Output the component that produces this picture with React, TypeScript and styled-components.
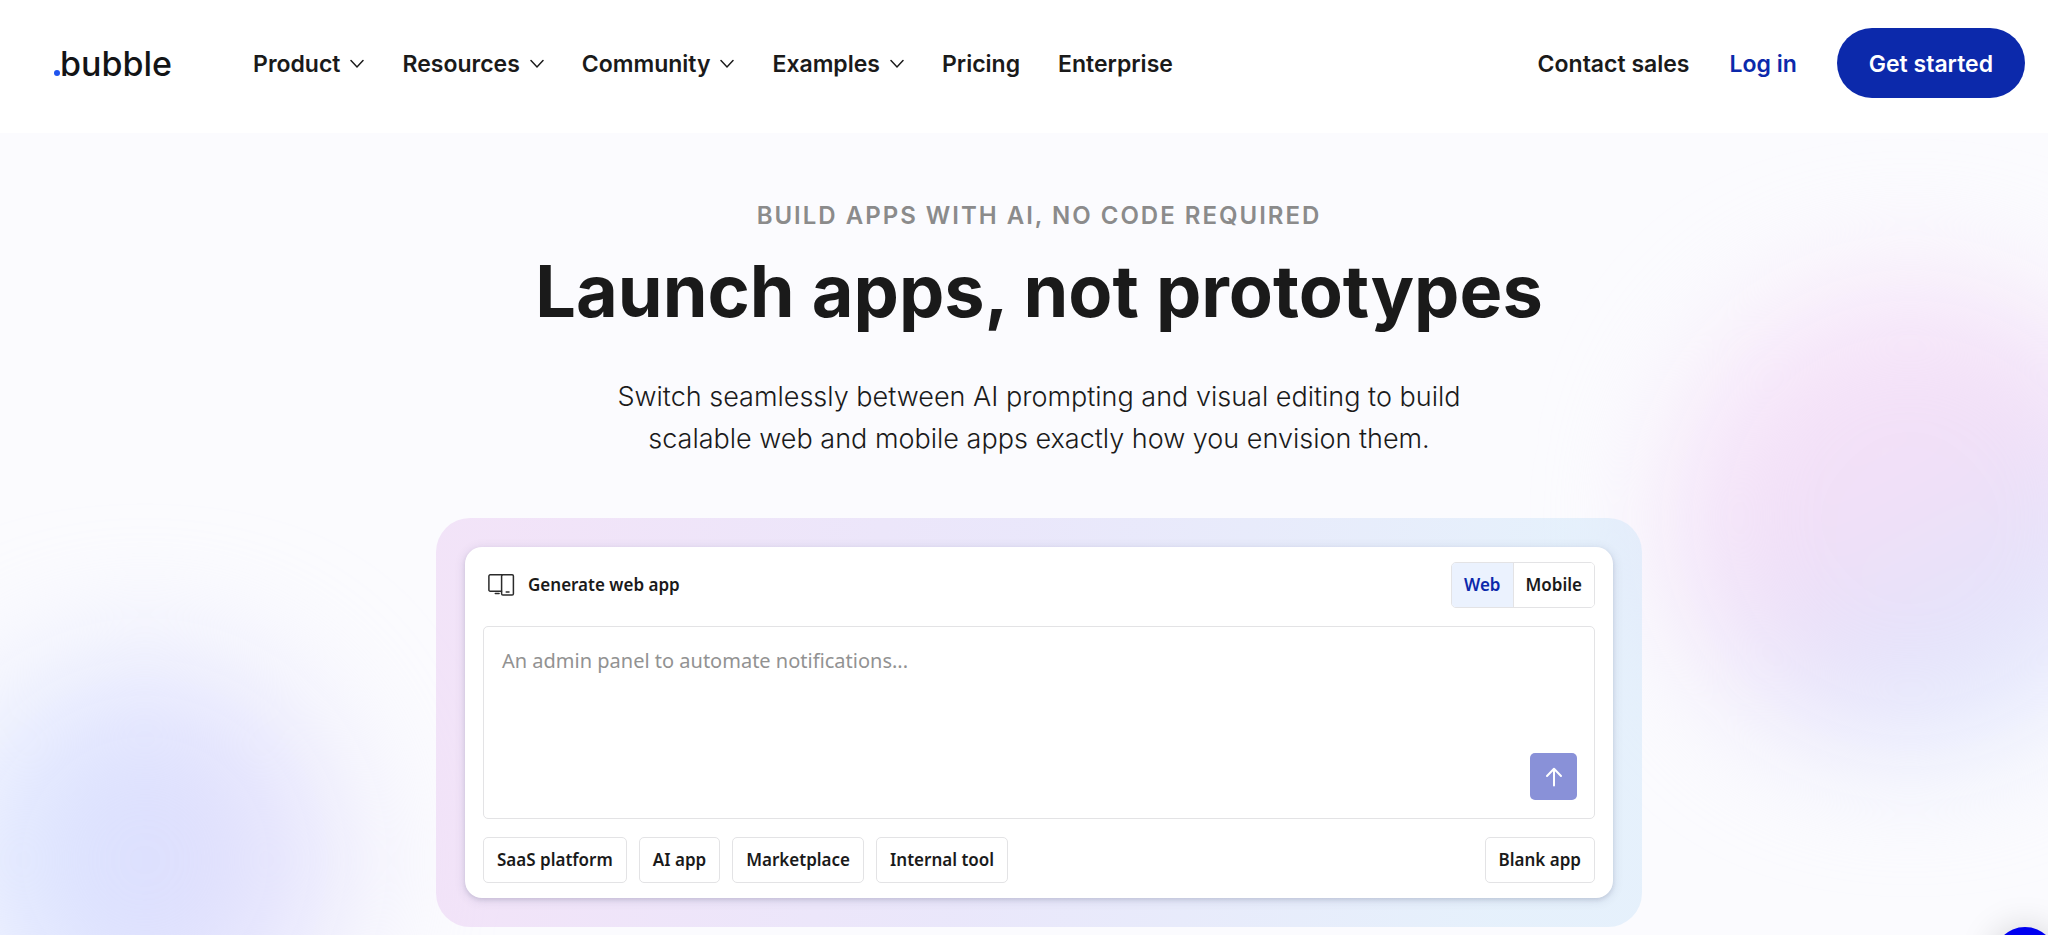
import React, { useState } from "react";
import styled, { createGlobalStyle } from "styled-components";

const ink = "#1a1a1a";
const blue = "#0c29ab";
const line = "#e3e3e5";
const displayFont = `Inter, "Liberation Sans", sans-serif`;
const uiFont = `"Noto Sans", "Open Sans", sans-serif`;

const GlobalStyle = createGlobalStyle`
  *, *::before, *::after { box-sizing: border-box; }
  body { margin: 0; background: #fff; color: ${ink}; font-family: ${displayFont}; }
  button, textarea { font: inherit; color: inherit; }
`;

const Page = styled.div`
  display: flex;
  flex-direction: column;
  min-height: 100vh;
  overflow: hidden;
`;

const Header = styled.header`
  display: flex;
  align-items: center;
  padding: 28px 23px 35px 54px;
  background: #fff;
`;

const Logo = styled.a`
  display: flex;
  align-items: baseline;
  padding-top: 2px;
  color: #131416;
  font-size: 34px;
  font-weight: 500;
  line-height: 48px;
  text-decoration: none;
`;

const LogoDot = styled.span`
  width: 6px;
  height: 6px;
  border-radius: 50%;
  background: #1f54ee;
`;

const Nav = styled.nav`
  display: flex;
  align-items: center;
  gap: 38px;
  margin-left: 81px;
  margin-right: auto;
`;

const NavMenu = styled.button`
  display: flex;
  align-items: center;
  gap: 10px;
  padding: 1px 0 0;
  border: 0;
  background: none;
  font-size: 23px;
  font-weight: 600;
  line-height: 32px;
  cursor: pointer;
`;

const NavLink = styled.a<{ $accent?: boolean }>`
  padding-top: 1px;
  color: ${(p) => (p.$accent ? blue : ink)};
  font-size: 23px;
  font-weight: 600;
  line-height: 32px;
  text-decoration: none;
`;

const Account = styled.div`
  display: flex;
  align-items: center;
  gap: 40px;
`;

const GetStarted = styled.a`
  padding: 20px 32px 18px;
  border-radius: 35px;
  background: ${blue};
  color: #fff;
  font-size: 23px;
  font-weight: 600;
  line-height: 32px;
  text-decoration: none;
`;

const Hero = styled.main`
  position: relative;
  flex: 1;
  display: flex;
  flex-direction: column;
  align-items: center;
  padding: 67px 0 8px 30px;
  background: #fbfbfe;
  overflow: hidden;
`;

const Glow = styled.div`
  position: absolute;
  border-radius: 50%;
  pointer-events: none;
`;

const LeftGlow = styled(Glow)`
  left: -50px;
  bottom: -120px;
  width: 390px;
  height: 390px;
  background: linear-gradient(90deg, #dde8ff, #dcdffe 50%, #e5e1fb);
  filter: blur(70px);
`;

const RightGlow = styled(Glow)`
  right: -102px;
  top: 145px;
  width: 480px;
  height: 480px;
  background: linear-gradient(152deg, #f7e5f9 10%, #f1dff7 46%, #e5e2fa 66%, #e3edff 92%);
  filter: blur(60px);
`;

const Copy = styled.div`
  position: relative;
  text-align: center;
`;

const Eyebrow = styled.p`
  margin: 0;
  color: #8b8b8b;
  font-size: 24px;
  font-weight: 600;
  line-height: 32px;
  letter-spacing: 2px;
  text-transform: uppercase;
`;

const Title = styled.h1`
  margin: 17px 0 0;
  font-size: 72px;
  font-weight: 700;
  line-height: 84px;
`;

const Lead = styled.p`
  margin: 43px 0 0;
  font-size: 27px;
  font-weight: 300;
  line-height: 42px;
`;

const Panel = styled.section`
  position: relative;
  width: 100%;
  max-width: 1206px;
  margin-top: 58px;
  padding: 29px;
  border-radius: 34px;
  background: linear-gradient(
    100deg,
    rgba(232, 202, 242, 0.48) 6%,
    rgba(215, 209, 247, 0.48) 46%,
    rgba(206, 229, 249, 0.48) 88%
  );
`;

const Card = styled.form`
  display: flex;
  flex-direction: column;
  gap: 18px;
  padding: 15px 18px;
  border-radius: 17px;
  background: #fff;
  box-shadow: 0 2px 4px rgba(30, 40, 80, 0.12), 0 2px 12px rgba(30, 40, 80, 0.12);
  font-family: ${uiFont};
  font-size: 17px;
  font-weight: 600;
  line-height: 24px;
`;

const Row = styled.div`
  display: flex;
  align-items: center;
  justify-content: space-between;
`;

const CardLabel = styled.label`
  display: flex;
  align-items: center;
  gap: 13px;
  padding-left: 5px;
`;

const Toggle = styled.div`
  display: flex;
  border: 1px solid ${line};
  border-radius: 5px;
  overflow: hidden;
`;

const ToggleOption = styled.button<{ $active: boolean }>`
  padding: 10px 12px;
  border: 0;
  background: ${(p) => (p.$active ? "#ebf2fe" : "#fff")};
  color: ${(p) => (p.$active ? blue : ink)};
  cursor: pointer;

  & + & {
    border-left: 1px solid ${line};
  }
`;

const PromptBox = styled.div`
  position: relative;
  display: flex;
`;

const Prompt = styled.textarea`
  flex: 1;
  height: 193px;
  padding: 19px 18px;
  border: 1px solid ${line};
  border-radius: 5px;
  background: #fff;
  font-size: 20px;
  font-weight: 400;
  line-height: 30px;
  resize: none;
  outline: none;

  &::placeholder {
    color: #929292;
    opacity: 1;
  }
`;

const Send = styled.button`
  position: absolute;
  right: 18px;
  bottom: 19px;
  display: grid;
  place-items: center;
  width: 47px;
  height: 47px;
  padding: 0;
  border: 0;
  border-radius: 5px;
  background: #8991d8;
  color: #fff;
  cursor: pointer;
`;

const Chips = styled.div`
  display: flex;
  gap: 12px;
`;

const Chip = styled.button`
  padding: 10px 13px;
  border: 1px solid ${line};
  border-radius: 5px;
  background: #fff;
  cursor: pointer;
`;

const ChatLauncher = styled.button`
  position: fixed;
  right: -9px;
  bottom: -56px;
  width: 64px;
  height: 64px;
  border: 0;
  border-radius: 50%;
  background: #0000f0;
  box-shadow: 0 2px 36px rgba(0, 0, 0, 0.18);
  cursor: pointer;
`;

const Chevron = () => (
  <svg width="14" height="10" viewBox="0 0 14 10" fill="none" stroke={ink} strokeWidth="1.5" strokeLinecap="round" aria-hidden="true">
    <path d="M1 1.5 7 7.9l6-6.4" />
  </svg>
);

const DevicesIcon = () => (
  <svg width="27" height="22" viewBox="0 0 27 22" fill="none" stroke="#2b2b2b" strokeWidth="1.5" strokeLinecap="round" aria-hidden="true">
    <path d="M13.5 17.2H2.2a1.3 1.3 0 0 1-1.3-1.3V2.1A1.3 1.3 0 0 1 2.2.8h12" />
    <rect x="13.6" y="0.8" width="11.8" height="20.2" rx="1.3" />
    <path d="M7.3 19.4h3.8M18.2 18h2.8" />
  </svg>
);

const ArrowUp = () => (
  <svg width="18" height="20" viewBox="0 0 18 20" fill="none" stroke="currentColor" strokeWidth="2" strokeLinecap="round" strokeLinejoin="round" aria-hidden="true">
    <path d="M9 18.5V2M2 9l7-7.2L16 9" />
  </svg>
);

const menus = ["Product", "Resources", "Community", "Examples"];
const links = ["Pricing", "Enterprise"];
const suggestions = ["SaaS platform", "AI app", "Marketplace", "Internal tool"];

export default function App() {
  const [platform, setPlatform] = useState("Web");
  const [prompt, setPrompt] = useState("");

  return (
    <Page>
      <GlobalStyle />
      <Header>
        <Logo href="#home">
          <LogoDot />
          bubble
        </Logo>
        <Nav aria-label="Main">
          {menus.map((name) => (
            <NavMenu key={name} type="button" aria-haspopup="true">
              {name}
              <Chevron />
            </NavMenu>
          ))}
          {links.map((name) => (
            <NavLink key={name} href={`#${name.toLowerCase()}`}>
              {name}
            </NavLink>
          ))}
        </Nav>
        <Account>
          <NavLink href="#contact">Contact sales</NavLink>
          <NavLink href="#login" $accent>
            Log in
          </NavLink>
          <GetStarted href="#signup">Get started</GetStarted>
        </Account>
      </Header>

      <Hero>
        <LeftGlow />
        <RightGlow />
        <Copy>
          <Eyebrow>Build apps with AI, no code required</Eyebrow>
          <Title>Launch apps, not prototypes</Title>
          <Lead>
            Switch seamlessly between AI prompting and visual editing to build
            <br />
            scalable web and mobile apps exactly how you envision them.
          </Lead>
        </Copy>
        <Panel>
          <Card onSubmit={(e) => e.preventDefault()}>
            <Row>
              <CardLabel htmlFor="prompt">
                <DevicesIcon />
                Generate web app
              </CardLabel>
              <Toggle role="group" aria-label="Platform">
                {["Web", "Mobile"].map((name) => (
                  <ToggleOption
                    key={name}
                    type="button"
                    $active={platform === name}
                    aria-pressed={platform === name}
                    onClick={() => setPlatform(name)}
                  >
                    {name}
                  </ToggleOption>
                ))}
              </Toggle>
            </Row>
            <PromptBox>
              <Prompt
                id="prompt"
                value={prompt}
                onChange={(e) => setPrompt(e.target.value)}
                placeholder="An admin panel to automate notifications..."
              />
              <Send type="submit" aria-label="Generate">
                <ArrowUp />
              </Send>
            </PromptBox>
            <Row>
              <Chips>
                {suggestions.map((name) => (
                  <Chip key={name} type="button" onClick={() => setPrompt(name)}>
                    {name}
                  </Chip>
                ))}
              </Chips>
              <Chip type="button">Blank app</Chip>
            </Row>
          </Card>
        </Panel>
      </Hero>
      <ChatLauncher type="button" aria-label="Open chat" />
    </Page>
  );
}
